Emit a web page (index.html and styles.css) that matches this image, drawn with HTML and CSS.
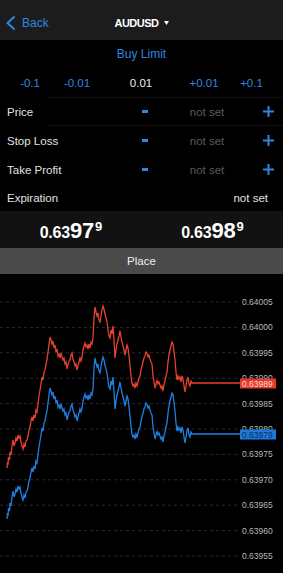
FILE: index.html
```html
<!DOCTYPE html>
<html>
<head>
<meta charset="utf-8">
<link rel="stylesheet" href="styles.css">
</head>
<body>
<div class="screen">
  <header class="nav">
    <div class="back">
      <svg class="chev" width="9" height="14" viewBox="0 0 9 14"><polyline points="8,1 1.5,7 8,13" fill="none" stroke="#2d87e0" stroke-width="2" stroke-linecap="round" stroke-linejoin="round"/></svg>
      <span>Back</span>
    </div>
    <div class="title">AUDUSD <svg width="5" height="4" viewBox="0 0 5 4"><polygon points="0,0 5,0 2.5,4" fill="#fff"/></svg></div>
    <div></div>
  </header>
  <div class="type">Buy Limit</div>
  <div class="steps">
    <span>-0.1</span><span>-0.01</span><span class="cur">0.01</span><span>+0.01</span><span>+0.1</span>
  </div>
  <div class="field rule-top rule-bottom">
    <span class="label">Price</span>
    <span class="ctl"><svg width="6" height="3"><rect width="6" height="3" fill="#2d87e0"/></svg></span>
    <span class="value">not set</span>
    <span class="ctl"><svg width="11" height="11" viewBox="0 0 11 11"><path d="M5.5 0V11M0 5.5H11" stroke="#2d87e0" stroke-width="2"/></svg></span>
  </div>
  <div class="field">
    <span class="label">Stop Loss</span>
    <span class="ctl"><svg width="6" height="3"><rect width="6" height="3" fill="#2d87e0"/></svg></span>
    <span class="value">not set</span>
    <span class="ctl"><svg width="11" height="11" viewBox="0 0 11 11"><path d="M5.5 0V11M0 5.5H11" stroke="#2d87e0" stroke-width="2"/></svg></span>
  </div>
  <div class="field">
    <span class="label">Take Profit</span>
    <span class="ctl"><svg width="6" height="3"><rect width="6" height="3" fill="#2d87e0"/></svg></span>
    <span class="value">not set</span>
    <span class="ctl"><svg width="11" height="11" viewBox="0 0 11 11"><path d="M5.5 0V11M0 5.5H11" stroke="#2d87e0" stroke-width="2"/></svg></span>
  </div>
  <div class="expiry">
    <span class="label">Expiration</span>
    <span class="exp-value">not set</span>
  </div>
  <div class="quotes">
    <div class="quote"><span class="sm">0.63</span>97<span class="sup">9</span></div>
    <div class="quote"><span class="sm">0.63</span>98<span class="sup">9</span></div>
  </div>
  <div class="place">Place</div>
  <svg class="chart" width="283" height="299" viewBox="0 274 283 299">
    <defs>
      <polyline id="price" fill="none" points="7,468 7.5,462 8,465 8.5,457 9.5,460 10,452 11,455 12,446 13,440 14,446 15,443 16,438 17,441 18,435 19,438 20,436 21,442 22,446 23,449 24,444 25,447 26,441 27,440 28,436 29,430 30,427 31,421 32,417 33,421 34,415 35,418 36,410 37,412 38,404 39,396 40,390 41,384 42,377 43,380 44,372 45,370 46,364 47,360 48,352 49,344 50,337 51,340 52,344 53,341 54,348 55,345 56,352 57,349 58,356 59,354 60,358 61,353 62,357 63,360 64,358 65,364 66,362 67,369 68,365 69,361 70,360 71,355 72,353 73,359 74,362 75,366 76,364 77,370 78,366 79,362 80,358 81,361 82,357 83,350 84,346 85,343 86,347 87,345 88,349 89,344 90,348 91,342 92,344 93,338 94,318 95,307 96,312 97,316 98,313 99,320 100,322 101,316 102,310 103,306 104,309 105,314 106,318 107,322 108,330 109,336 110,338 111,330 112,334 113,326 114,340 115,358 116,350 117,344 118,340 119,336 120,331 121,337 122,342 123,346 124,350 125,355 126,350 127,345 128,348 129,356 130,365 131,376 132,383 133,386 134,384 135,388 136,383 137,386 138,382 139,378 140,376 141,370 142,366 143,362 144,358 145,356 146,352 147,353 148,357 149,355 150,359 151,362 152,364 153,376 154,382 155,388 156,384 157,380 158,384 159,382 160,385 161,388 162,386 163,391 164,385 165,381 166,376 167,372 168,362 169,355 170,350 171,346 172,342 173,344 174,352 175,360 176,372 177,380 178,376 179,379 180,377 181,382 182,376 183,379 184,386 185,392 186,386 187,380 188,377 189,384 190,386 191,381 192,383 193,383 240,383"/>
    </defs>
    <g stroke="#2b2b2b" stroke-width="1" stroke-dasharray="3 3">
      <line x1="0" y1="302" x2="238" y2="302"/>
      <line x1="0" y1="327.4" x2="238" y2="327.4"/>
      <line x1="0" y1="352.8" x2="238" y2="352.8"/>
      <line x1="0" y1="378.2" x2="238" y2="378.2"/>
      <line x1="0" y1="403.6" x2="238" y2="403.6"/>
      <line x1="0" y1="429" x2="238" y2="429"/>
      <line x1="0" y1="454.4" x2="238" y2="454.4"/>
      <line x1="0" y1="479.8" x2="238" y2="479.8"/>
      <line x1="0" y1="505.2" x2="238" y2="505.2"/>
      <line x1="0" y1="530.6" x2="238" y2="530.6"/>
      <line x1="0" y1="556" x2="238" y2="556"/>
    </g>
    <g class="axis">
      <text x="242" y="305">0.64005</text>
      <text x="242" y="330.4">0.64000</text>
      <text x="242" y="355.8">0.63995</text>
      <text x="242" y="381.2">0.63990</text>
      <text x="242" y="406.6">0.63985</text>
      <text x="242" y="432">0.63980</text>
      <text x="242" y="457.4">0.63975</text>
      <text x="242" y="482.8">0.63970</text>
      <text x="242" y="508.2">0.63965</text>
      <text x="242" y="533.6">0.63960</text>
      <text x="242" y="559">0.63955</text>
    </g>
    <use href="#price" stroke="#e4422f" stroke-width="1.3"/>
    <use href="#price" transform="translate(0,51)" stroke="#1f7fe0" stroke-width="1.3"/>
    <rect x="240" y="378.5" width="36" height="10" fill="#e23b2a"/>
    <text class="tag" x="242" y="386.7" fill="#ffd6cf">0.63989</text>
    <rect x="240" y="429.5" width="36" height="10" fill="#1c7ad9"/>
    <text class="tag" x="242" y="437.7" fill="#0b2d5e">0.63979</text>
  </svg>
</div>
</body>
</html>
```
FILE: styles.css
```css
body {
  margin: 0;
  background: #000;
  font-family: "Liberation Sans", Arial, sans-serif;
}

.screen {
  width: 283px;
  height: 573px;
  overflow: hidden;
  display: flex;
  flex-direction: column;
  background: #000;
}

.nav {
  flex: none;
  height: 40px;
  box-sizing: border-box;
  padding-top: 6px;
  background: #1c1c1c;
  display: grid;
  grid-template-columns: 1fr auto 1fr;
  align-items: center;
}

.back {
  display: flex;
  align-items: center;
  gap: 7px;
  padding-left: 6px;
  color: #2d87e0;
  font-size: 12px;
}

.chev {
  display: block;
}

.title {
  display: flex;
  align-items: center;
  gap: 5px;
  color: #fff;
  font-weight: bold;
  font-size: 11px;
  letter-spacing: -0.5px;
}

.title svg {
  display: block;
}

.type {
  flex: none;
  height: 28px;
  display: flex;
  align-items: center;
  justify-content: center;
  color: #2d87e0;
  font-size: 12px;
}

.steps {
  flex: none;
  height: 29px;
  display: grid;
  grid-template-columns: 60px 34px 94px 32px 63px;
  align-items: center;
  text-align: center;
  color: #2d87e0;
  font-size: 11.5px;
}

.steps .cur {
  color: #ececec;
}

.field {
  flex: none;
  height: 29px;
  display: grid;
  grid-template-columns: 130px 30px 94px 29px;
  align-items: center;
  font-size: 11.5px;
}

.rule-top.rule-bottom {
  background:
    linear-gradient(#111, #111) no-repeat 47px 0 / 236px 1px,
    linear-gradient(#111, #111) no-repeat 47px 100% / 236px 1px;
}

.label {
  padding-left: 7px;
  color: #e2e2e2;
}

.ctl {
  display: flex;
  justify-content: center;
  align-items: center;
}

.ctl svg {
  display: block;
}

.value {
  text-align: center;
  color: #5a5a5a;
}

.expiry {
  flex: none;
  height: 27px;
  display: flex;
  align-items: center;
  justify-content: space-between;
  padding-right: 15px;
  font-size: 11.5px;
}

.exp-value {
  color: #e2e2e2;
}

.quotes {
  flex: none;
  height: 37px;
  box-sizing: border-box;
  padding-top: 9px;
  background: #121212;
  display: grid;
  grid-template-columns: 1fr 1fr;
}

.quote {
  text-align: center;
  color: #fff;
  font-weight: bold;
  font-size: 22px;
  line-height: 1;
  letter-spacing: -0.3px;
}

.quote .sm {
  font-size: 16px;
  letter-spacing: -0.2px;
}

.quote .sup {
  font-size: 13px;
  vertical-align: top;
  margin-left: 1px;
}

.place {
  flex: none;
  height: 26px;
  background: #4a4a4a;
  color: #f0f0f0;
  font-size: 11.5px;
  display: flex;
  align-items: center;
  justify-content: center;
}

.chart {
  display: block;
  flex: none;
}

.axis text {
  fill: #b8b8b8;
  font-size: 8.5px;
  font-family: "Liberation Sans", Arial, sans-serif;
}

.tag {
  font-size: 8.5px;
  font-family: "Liberation Sans", Arial, sans-serif;
}
```
